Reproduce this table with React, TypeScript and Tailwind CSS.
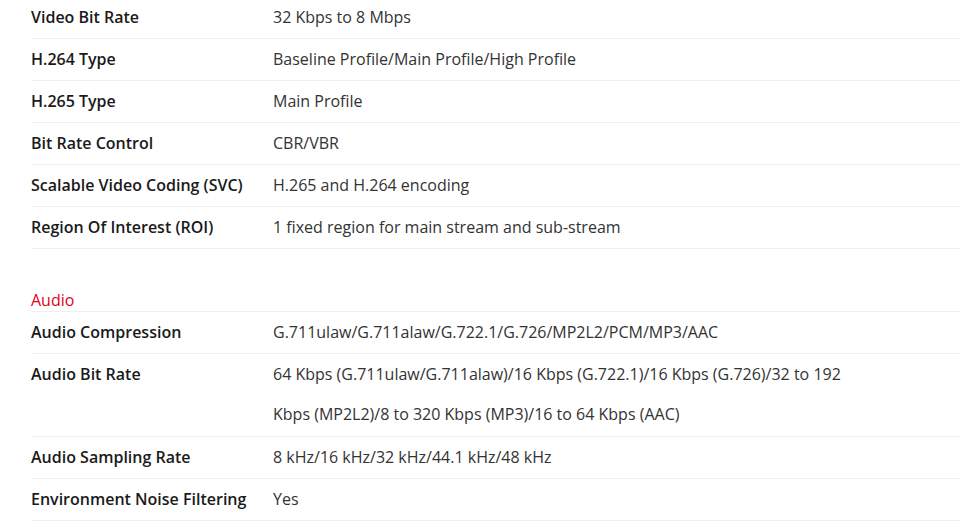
import React from 'react';

type Row = { label: string; value: React.ReactNode; tall?: boolean };

const videoRows: Row[] = [
  { label: 'Video Bit Rate', value: '32 Kbps to 8 Mbps' },
  { label: 'H.264 Type', value: 'Baseline Profile/Main Profile/High Profile' },
  { label: 'H.265 Type', value: 'Main Profile' },
  { label: 'Bit Rate Control', value: 'CBR/VBR' },
  { label: 'Scalable Video Coding (SVC)', value: 'H.265 and H.264 encoding' },
  { label: 'Region Of Interest (ROI)', value: '1 fixed region for main stream and sub-stream' },
];

const audioRows: Row[] = [
  { label: 'Audio Compression', value: 'G.711ulaw/G.711alaw/G.722.1/G.726/MP2L2/PCM/MP3/AAC' },
  {
    label: 'Audio Bit Rate',
    tall: true,
    value: (
      <>
        64 Kbps (G.711ulaw/G.711alaw)/16 Kbps (G.722.1)/16 Kbps (G.726)/32 to 192
        <br />
        Kbps (MP2L2)/8 to 320 Kbps (MP3)/16 to 64 Kbps (AAC)
      </>
    ),
  },
  { label: 'Audio Sampling Rate', value: '8 kHz/16 kHz/32 kHz/44.1 kHz/48 kHz' },
  { label: 'Environment Noise Filtering', value: 'Yes' },
];

function SpecRow({ label, value, tall }: Row) {
  return (
    <div className={tall ? 'flex pb-[2px] border-b border-[#efefef] leading-[40px]' : 'flex pb-px border-b border-[#efefef] leading-[40px]'}>
      <div className="w-[242px] shrink-0 font-semibold text-[#1a1a1a]">{label}</div>
      <div className="flex-1 text-[#333]">{value}</div>
    </div>
  );
}

export default function App() {
  return (
    <div className="min-h-screen bg-white overflow-hidden" style={{ fontFamily: '"Open Sans", "Noto Sans", sans-serif' }}>
      <div className="ml-[31px] w-[929px] -mt-[3px] text-[16px]">
        {videoRows.map((row) => (
          <SpecRow key={row.label} {...row} />
        ))}

        <h3 className="mt-[40px] leading-[22px] text-[16px] font-normal text-[#e0001b] border-b border-[#efefef]">
          Audio
        </h3>

        {audioRows.map((row) => (
          <SpecRow key={row.label} {...row} />
        ))}
      </div>
    </div>
  );
}
